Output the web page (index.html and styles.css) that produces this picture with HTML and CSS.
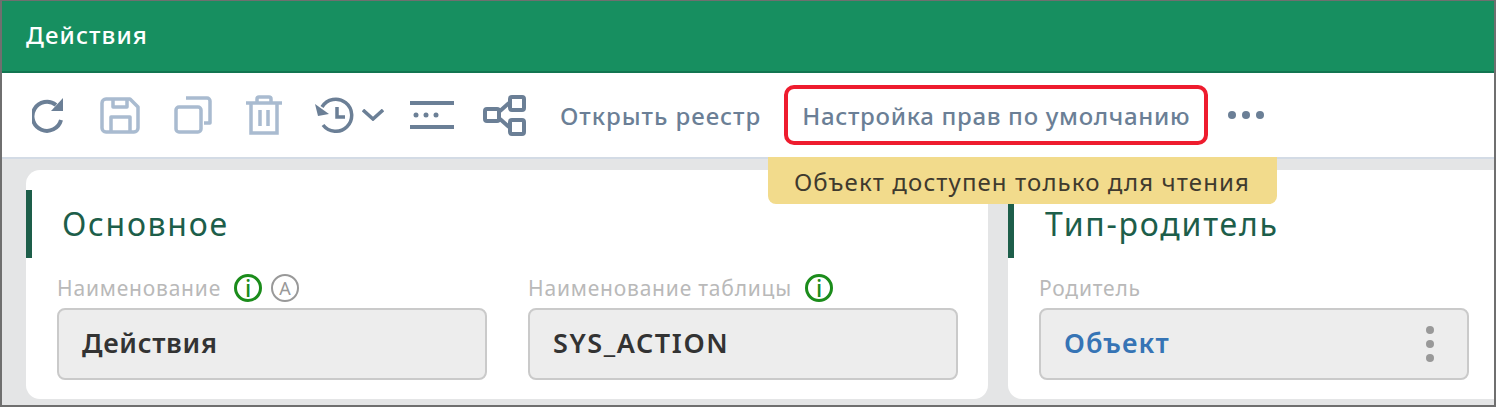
FILE: index.html
```html
<!doctype html>
<html lang="ru">
  <head>
    <meta charset="UTF-8" />
    <title>Действия</title>
    <link rel="stylesheet" href="styles.css">
  </head>
  <body>
    <div class="window">
      <header class="header">Действия</header>

      <div class="toolbar">
        <span class="tool tool-refresh">
          <svg width="32" height="36" viewBox="0 0 32 36" fill="none" stroke="currentColor" stroke-width="4">
            <path d="M29 23a14.500 14.500 0 1 1 -5 -15" />
            <path d="M31 1v13h-12z" fill="currentColor" stroke="none" />
          </svg>
        </span>
        <span class="tool tool-save muted">
          <svg width="40" height="37" viewBox="0 0 40 37" fill="none" stroke="currentColor" stroke-width="3.500" stroke-linejoin="round">
            <path d="M6 2h24l8 8v21a4 4 0 0 1 -4 4h-28a4 4 0 0 1 -4 -4v-25a4 4 0 0 1 4 -4z" />
            <path d="M13 2v8h14v-8" />
            <path d="M11 35v-15h19v15" />
          </svg>
        </span>
        <span class="tool tool-copy muted">
          <svg width="38" height="38" viewBox="0 0 38 38" fill="none" stroke="currentColor" stroke-width="3.500" stroke-linejoin="round">
            <rect x="2" y="11" width="25" height="25" rx="3" />
            <path d="M12 2h21a3 3 0 0 1 3 3v22h-6" />
          </svg>
        </span>
        <span class="tool tool-trash muted">
          <svg width="36" height="40" viewBox="0 0 36 40" fill="none" stroke="currentColor" stroke-width="3.500">
            <path d="M0 8h36" />
            <path d="M11 7v-3a2 2 0 0 1 2 -2h10a2 2 0 0 1 2 2v3" />
            <path d="M5 8v30h26v-30" />
            <path d="M14 15v16M22 15v16" />
          </svg>
        </span>
        <span class="tool tool-history">
          <svg width="40" height="36" viewBox="0 0 40 36" fill="none" stroke="currentColor" stroke-width="3.500">
            <path d="M8 10a16 16 0 1 1 1 18" />
            <path d="M1 7l3 12l11 -2z" fill="currentColor" stroke="none" />
            <path d="M23 10v10h8" />
          </svg>
          <svg class="chevron" width="22" height="12" viewBox="0 0 22 12" fill="none" stroke="currentColor" stroke-width="3.500">
            <path d="M1 1l10 9l10 -9" />
          </svg>
        </span>
        <span class="tool tool-lines">
          <svg width="44" height="28" viewBox="0 0 44 28" fill="currentColor">
            <rect x="0" y="0" width="44" height="4" />
            <rect x="0" y="24" width="44" height="4" />
            <circle cx="6" cy="14" r="2.500" />
            <circle cx="16" cy="14" r="2.500" />
            <circle cx="26" cy="14" r="2.500" />
          </svg>
        </span>
        <span class="tool tool-share">
          <svg width="44" height="44" viewBox="0 0 44 44" fill="none" stroke="currentColor" stroke-width="4">
            <rect x="3" y="16" width="14" height="12" rx="2" />
            <rect x="28" y="4" width="14" height="13" rx="2" />
            <rect x="28" y="27" width="14" height="14" rx="2" />
            <path d="M18 18l9 -8M18 26l9 8" />
          </svg>
        </span>
        <span class="tool-link first">Открыть реестр</span>
        <span class="tool-link highlighted">Настройка прав по умолчанию</span>
        <span class="more"><i></i><i></i><i></i></span>
        <div class="readonly-note">Объект доступен только для чтения</div>
      </div>

      <div class="content">
        <section class="card card-main">
          <h2 class="card-title">Основное</h2>
          <div class="fields">
            <div class="field">
              <div class="field-label">
                Наименование
                <span class="badge badge-info">i</span>
                <span class="badge badge-auto">A</span>
              </div>
              <div class="field-value">Действия</div>
            </div>
            <div class="field">
              <div class="field-label">
                Наименование таблицы
                <span class="badge badge-info">i</span>
              </div>
              <div class="field-value code">SYS_ACTION</div>
            </div>
          </div>
        </section>

        <section class="card card-parent">
          <h2 class="card-title">Тип-родитель</h2>
          <div class="fields">
            <div class="field">
              <div class="field-label">Родитель</div>
              <div class="field-value link">
                <span>Объект</span>
                <span class="kebab"><i></i><i></i><i></i></span>
              </div>
            </div>
          </div>
        </section>
      </div>
    </div>
  </body>
</html>
```

FILE: styles.css
```css
* {
  box-sizing: border-box;
}

body {
  margin: 0;
  font-family: "Noto Sans", "Liberation Sans", sans-serif;
}

.window {
  height: 407px;
  border: 1px solid #6f6f6f;
  border-width: 1px 2px 2px 2px;
  background: #e4e5e6;
  overflow: hidden;
}

.header {
  height: 72px;
  padding: 0 24px;
  line-height: 67px;
  font-size: 24px;
  font-weight: 500;
  letter-spacing: 1.1px;
  color: #fff;
  background: #178f60;
  border-bottom: 2px solid #127551;
}

/* Toolbar */
.toolbar {
  position: relative;
  display: flex;
  align-items: center;
  height: 86px;
  padding-left: 10px;
  background: #fff;
  border-bottom: 2px solid #d3dbe5;
  color: #6b7f96;
}

.tool {
  display: flex;
  align-items: center;
  justify-content: center;
}

.muted {
  color: #a9bbd0;
}

.tool-refresh {
  width: 72px;
}

.tool-save {
  width: 72px;
}

.tool-copy {
  width: 74px;
}

.tool-trash {
  width: 68px;
}

.tool-history {
  width: 102px;
  gap: 8px;
}

.tool-lines {
  width: 64px;
}

.tool-share {
  width: 80px;
}

.tool-link {
  font-size: 24px;
  font-weight: 500;
  letter-spacing: 0.68px;
  white-space: nowrap;
}

.first {
  margin-left: 16px;
  letter-spacing: 0.95px;
}

.highlighted {
  display: flex;
  align-items: center;
  height: 60px;
  margin-left: 23px;
  padding: 0 14px;
  border: 4px solid #ee1c2e;
  border-radius: 10px;
}

.more {
  display: flex;
  gap: 6px;
  margin-left: 20px;
}

.more i {
  width: 8px;
  height: 8px;
  border-radius: 50%;
  background: #6b7f96;
}

.readonly-note {
  position: absolute;
  z-index: 2;
  left: 766px;
  top: 84px;
  width: 509px;
  height: 47px;
  padding-left: 26px;
  border-radius: 0 0 8px 8px;
  background: #f2db8c;
  color: #3f3a2e;
  font-size: 24px;
  letter-spacing: 1.1px;
  line-height: 49px;
  white-space: nowrap;
}

/* Cards */
.content {
  display: flex;
  gap: 20px;
  padding: 11px 0 0 24px;
}

.card {
  flex: none;
  height: 229px;
  padding-top: 20px;
  background: #fff;
  border-radius: 14px;
}

.card-main {
  width: 962px;
}

.card-parent {
  width: 490px;
  border-radius: 14px 0 0 14px;
}

.card-title {
  height: 68px;
  margin: 0;
  padding-left: 30px;
  border-left: 6px solid #1d5e4a;
  color: #1d5e4a;
  font-size: 32px;
  font-weight: 400;
  letter-spacing: 1.7px;
  line-height: 68px;
  white-space: nowrap;
}

.card-parent .card-title {
  padding-left: 31px;
  letter-spacing: 1.8px;
}

.fields {
  display: flex;
  gap: 41px;
  padding: 13px 0 0 31px;
}

.field {
  width: 430px;
}

.field-label {
  display: flex;
  align-items: center;
  gap: 13px;
  height: 33px;
  margin-bottom: 4px;
  color: #b9b9b9;
  font-size: 21px;
  letter-spacing: 0.8px;
  white-space: nowrap;
}

.badge {
  display: flex;
  align-items: center;
  justify-content: center;
  width: 28px;
  height: 28px;
  margin-top: 1px;
  border-radius: 50%;
  border: 3px solid #1b8c1b;
  color: #1b8c1b;
  font-size: 23px;
  font-weight: 500;
  letter-spacing: 0;
  line-height: 1;
}

.badge-auto {
  margin-left: -4px;
  border-width: 2px;
  border-color: #999;
  color: #999;
  font-size: 18px;
  font-weight: 400;
}

.field-value {
  display: flex;
  align-items: center;
  justify-content: space-between;
  height: 72px;
  padding: 0 23px 3px;
  background: #ededed;
  border: 2px solid #cacaca;
  border-radius: 8px;
  color: #333;
  font-size: 27px;
  font-weight: 600;
  letter-spacing: 0.7px;
}

.code {
  letter-spacing: 1.6px;
}

.link {
  color: #3674b5;
  letter-spacing: 1.1px;
}

.kebab {
  display: flex;
  flex-direction: column;
  gap: 6px;
  margin: 3px 10px 0 0;
}

.kebab i {
  width: 8px;
  height: 8px;
  border-radius: 50%;
  background: #999;
}
```
